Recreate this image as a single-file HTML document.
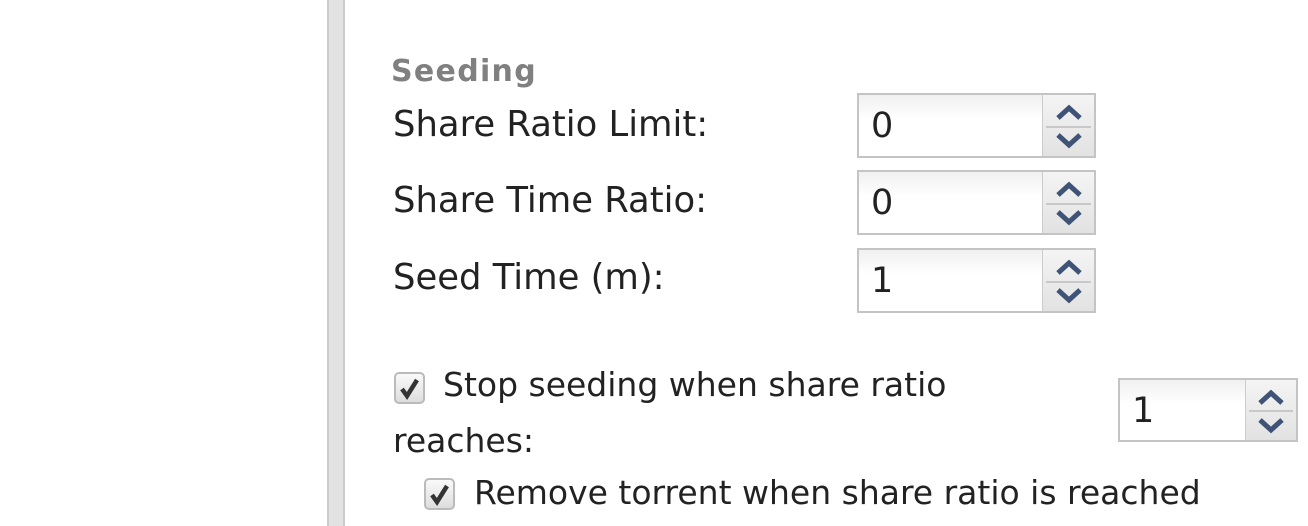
<!DOCTYPE html>
<html><head><style>
body{margin:0;width:1308px;height:526px;background:#fff;position:relative;overflow:hidden;font-family:"DejaVu Sans","Liberation Sans",sans-serif;color:#222}
.bar{position:absolute;left:327px;top:0;width:18px;height:526px;background:#e2e2e2;border-left:2px solid #ccc;border-right:2px solid #ccc;box-sizing:border-box}
.t{position:absolute;font-size:35.4px;line-height:1;white-space:nowrap}
.c{font-size:33px}
.h{position:absolute;left:391px;top:57px;font-size:30px;line-height:1;font-weight:bold;color:#808080;letter-spacing:1.3px}
.spin{position:absolute;border:2px solid #c4c4c4;box-sizing:border-box;background:linear-gradient(#f0f0f0,#fff 40%)}
.spin .v{position:absolute;left:12px;top:14px;font-size:35px;line-height:1}
.spin .b{position:absolute;right:0;top:0;bottom:0;width:51px;border-left:1px solid #ccc;background:linear-gradient(#f4f4f4,#e2e2e2)}
.spin .b:after{content:"";position:absolute;left:3px;right:3px;top:50%;border-top:2px solid #c8c8c8}
.spin svg{position:absolute;left:50%;margin-left:-14px}
.cb{position:absolute;width:31px;height:32px;border:2px solid #bbb;border-radius:5px;background:linear-gradient(#fafafa,#ddd);box-sizing:border-box}
</style></head><body>
<div class="bar"></div>
<div class="h">Seeding</div>
<div class="t" style="left:393px;top:107px">Share Ratio Limit:</div>
<div class="t" style="left:393px;top:183px">Share Time Ratio:</div>
<div class="t" style="left:393px;top:260px">Seed Time (m):</div>

<div class="spin" style="left:857px;top:93px;width:239px;height:65px"><div class="v">0</div><div class="b"><svg width="28" height="16" style="top:9px" viewBox="0 0 28 16"><path d="M3 14L14 4L25 14" fill="none" stroke="#3e5375" stroke-width="5"/></svg><svg width="28" height="16" style="top:38px" viewBox="0 0 28 16"><path d="M3 2L14 12L25 2" fill="none" stroke="#3e5375" stroke-width="5"/></svg></div></div>
<div class="spin" style="left:857px;top:170px;width:239px;height:65px"><div class="v">0</div><div class="b"><svg width="28" height="16" style="top:9px" viewBox="0 0 28 16"><path d="M3 14L14 4L25 14" fill="none" stroke="#3e5375" stroke-width="5"/></svg><svg width="28" height="16" style="top:38px" viewBox="0 0 28 16"><path d="M3 2L14 12L25 2" fill="none" stroke="#3e5375" stroke-width="5"/></svg></div></div>
<div class="spin" style="left:857px;top:248px;width:239px;height:65px"><div class="v">1</div><div class="b"><svg width="28" height="16" style="top:9px" viewBox="0 0 28 16"><path d="M3 14L14 4L25 14" fill="none" stroke="#3e5375" stroke-width="5"/></svg><svg width="28" height="16" style="top:38px" viewBox="0 0 28 16"><path d="M3 2L14 12L25 2" fill="none" stroke="#3e5375" stroke-width="5"/></svg></div></div>

<div class="cb" style="left:394px;top:372px"><svg width="27" height="28" viewBox="0 0 27 28"><path d="M6 15L11 22L21 6" fill="none" stroke="#333" stroke-width="4.5"/></svg></div>
<div class="t c" style="left:443px;top:368px">Stop seeding when share ratio</div>
<div class="t c" style="left:393px;top:424px">reaches:</div>
<div class="spin" style="left:1118px;top:378px;width:180px;height:64px"><div class="v">1</div><div class="b" style="width:50px"><svg width="28" height="16" style="top:9px" viewBox="0 0 28 16"><path d="M3 14L14 4L25 14" fill="none" stroke="#3e5375" stroke-width="5"/></svg><svg width="28" height="16" style="top:38px" viewBox="0 0 28 16"><path d="M3 2L14 12L25 2" fill="none" stroke="#3e5375" stroke-width="5"/></svg></div></div>

<div class="cb" style="left:424px;top:478px"><svg width="27" height="28" viewBox="0 0 27 28"><path d="M6 15L11 22L21 6" fill="none" stroke="#333" stroke-width="4.5"/></svg></div>
<div class="t c" style="left:474px;top:476px">Remove torrent when share ratio is reached</div>
</body></html>
